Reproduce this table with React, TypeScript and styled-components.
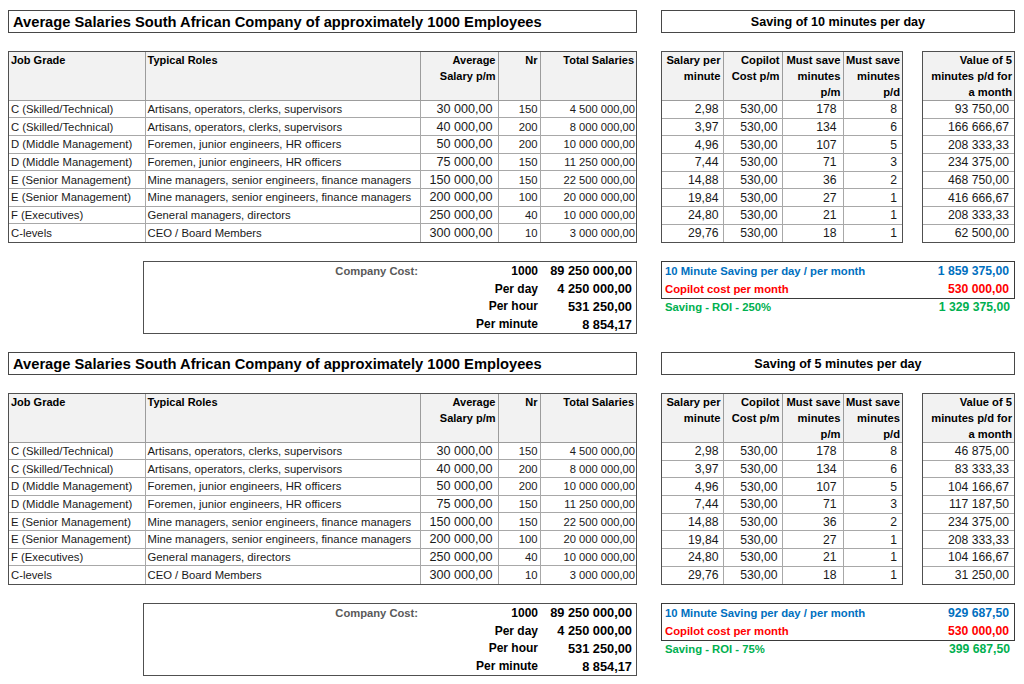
import React from 'react';
import styled, { createGlobalStyle } from 'styled-components';

const GlobalStyle = createGlobalStyle`
  html, body { margin: 0; padding: 0; background: #ffffff; }
  body { font-family: "Liberation Sans", Arial, sans-serif; color: #000; }
  * { box-sizing: border-box; }
`;

const Page = styled.div`
  display: flex;
  flex-direction: column;
  gap: 18px;
  padding: 10px 0 0 8px;
  width: 1024px;
`;

const Section = styled.section`
  display: grid;
  grid-template-columns: 629px 24px 242px 19px 93px;
  grid-template-rows: 23px auto auto;
  row-gap: 18px;
  align-items: start;
`;

const TitleBox = styled.div<{ $wide?: boolean }>`
  grid-column: ${p => (p.$wide ? '1 / 2' : '3 / 6')};
  height: 23px;
  border: 1px solid #474747;
  display: flex;
  align-items: center;
  justify-content: ${p => (p.$wide ? 'flex-start' : 'center')};
  padding: 0 4px;
  font-weight: 700;
  font-size: ${p => (p.$wide ? '14.7px' : '12.6px')};
  white-space: nowrap;
`;

const TableBox = styled.div<{ $col: string }>`
  grid-column: ${p => p.$col};
  border: 1px solid #505050;
`;

const Grid = styled.table`
  width: 100%;
  border-collapse: collapse;
  border-style: hidden;
  table-layout: fixed;
`;

const HeadRow = styled.tr`
  height: 48px;
`;

const BodyRow = styled.tr`
  height: 17.7px;
`;

const Th = styled.th<{ $left?: boolean; $size?: number }>`
  background: #f2f2f2;
  border: 1px solid #9c9c9c;
  font-weight: 700;
  font-size: ${p => p.$size ?? 11}px;
  line-height: 16px;
  text-align: ${p => (p.$left ? 'left' : 'right')};
  vertical-align: top;
  padding: 0 2px;
`;

const Td = styled.td<{ $left?: boolean; $size?: number; $pad?: number }>`
  border: 1px solid #a8a8a8;
  background: #ffffff;
  font-size: ${p => p.$size ?? 11.3}px;
  line-height: 15px;
  color: #1a1a1a;
  text-align: ${p => (p.$left ? 'left' : 'right')};
  vertical-align: middle;
  white-space: nowrap;
  overflow: hidden;
  padding: 1px ${p => (p.$left ? 2 : p.$pad ?? 2)}px 0 2px;
`;

const CostBox = styled.div`
  grid-column: 1 / 2;
  margin-left: 135px;
  border: 1px solid #505050;
  display: grid;
  grid-template-columns: 1fr 120px 96px;
  grid-auto-rows: 17.75px;
`;

const CostCell = styled.div<{ $muted?: boolean; $value?: boolean }>`
  display: flex;
  align-items: center;
  justify-content: flex-end;
  padding-right: ${p => (p.$value ? 4 : 2)}px;
  font-weight: 700;
  font-size: ${p => (p.$value ? 12.8 : p.$muted ? 11.2 : 12)}px;
  color: ${p => (p.$muted ? '#595959' : '#000')};
  white-space: nowrap;
`;

const RoiArea = styled.div`
  grid-column: 3 / 6;
  display: flex;
  flex-direction: column;
`;

const RoiBox = styled.div`
  border: 1px solid #3a3a3a;
  display: flex;
  flex-direction: column;
`;

const RoiRow = styled.div<{ $color: string; $outside?: boolean }>`
  height: 17.75px;
  display: flex;
  align-items: center;
  justify-content: space-between;
  padding: 0 5px 0 ${p => (p.$outside ? 4 : 3)}px;
  color: ${p => p.$color};
  font-weight: 700;
  white-space: nowrap;
`;

const RoiLabel = styled.span`
  font-size: 11.3px;
`;

const RoiValue = styled.span`
  font-size: 12.2px;
`;

type LeftRow = [string, string, string, string, string];

const leftRows: LeftRow[] = [
  ['C (Skilled/Technical)', 'Artisans, operators, clerks, supervisors', '30 000,00', '150', '4 500 000,00'],
  ['C (Skilled/Technical)', 'Artisans, operators, clerks, supervisors', '40 000,00', '200', '8 000 000,00'],
  ['D (Middle Management)', 'Foremen, junior engineers, HR officers', '50 000,00', '200', '10 000 000,00'],
  ['D (Middle Management)', 'Foremen, junior engineers, HR officers', '75 000,00', '150', '11 250 000,00'],
  ['E (Senior Management)', 'Mine managers, senior engineers, finance managers', '150 000,00', '150', '22 500 000,00'],
  ['E (Senior Management)', 'Mine managers, senior engineers, finance managers', '200 000,00', '100', '20 000 000,00'],
  ['F (Executives)', 'General managers, directors', '250 000,00', '40', '10 000 000,00'],
  ['C-levels', 'CEO / Board Members', '300 000,00', '10', '3 000 000,00'],
];

const rightRows: [string, string, string, string][] = [
  ['2,98', '530,00', '178', '8'],
  ['3,97', '530,00', '134', '6'],
  ['4,96', '530,00', '107', '5'],
  ['7,44', '530,00', '71', '3'],
  ['14,88', '530,00', '36', '2'],
  ['19,84', '530,00', '27', '1'],
  ['24,80', '530,00', '21', '1'],
  ['29,76', '530,00', '18', '1'],
];

interface SectionData {
  minutes: number;
  values: string[];
  saving: string;
  roi: string;
  result: string;
}

const sections: SectionData[] = [
  {
    minutes: 10,
    values: ['93 750,00', '166 666,67', '208 333,33', '234 375,00', '468 750,00', '416 666,67', '208 333,33', '62 500,00'],
    saving: '1 859 375,00',
    roi: '250%',
    result: '1 329 375,00',
  },
  {
    minutes: 5,
    values: ['46 875,00', '83 333,33', '104 166,67', '117 187,50', '234 375,00', '208 333,33', '104 166,67', '31 250,00'],
    saving: '929 687,50',
    roi: '75%',
    result: '399 687,50',
  },
];

const costRows: [string, string, string][] = [
  ['Company Cost:', '1000', '89 250 000,00'],
  ['', 'Per day', '4 250 000,00'],
  ['', 'Per hour', '531 250,00'],
  ['', 'Per minute', '8 854,17'],
];

const SalarySection: React.FC<{ data: SectionData }> = ({ data }) => (
  <Section>
    <TitleBox $wide>Average Salaries South African Company of approximately 1000 Employees</TitleBox>
    <TitleBox>Saving of {data.minutes} minutes per day</TitleBox>

    <TableBox $col="1 / 2">
      <Grid>
        <colgroup>
          <col style={{ width: 136 }} />
          <col style={{ width: 275 }} />
          <col style={{ width: 78 }} />
          <col style={{ width: 42 }} />
          <col style={{ width: 96 }} />
        </colgroup>
        <thead>
          <HeadRow>
            <Th $left>Job Grade</Th>
            <Th $left>Typical Roles</Th>
            <Th>
              Average
              <br />
              Salary p/m
            </Th>
            <Th>Nr</Th>
            <Th>Total Salaries</Th>
          </HeadRow>
        </thead>
        <tbody>
          {leftRows.map((r, i) => (
            <BodyRow key={i}>
              <Td $left>{r[0]}</Td>
              <Td $left>{r[1]}</Td>
              <Td $size={12.6} $pad={5}>{r[2]}</Td>
              <Td $size={11.3}>{r[3]}</Td>
              <Td $size={11.2} $pad={1}>{r[4]}</Td>
            </BodyRow>
          ))}
        </tbody>
      </Grid>
    </TableBox>

    <TableBox $col="3 / 4">
      <Grid>
        <colgroup>
          <col style={{ width: 61 }} />
          <col style={{ width: 59 }} />
          <col style={{ width: 61 }} />
          <col style={{ width: 59 }} />
        </colgroup>
        <thead>
          <HeadRow>
            <Th $size={11.2}>
              Salary per
              <br />
              minute
            </Th>
            <Th $size={11.2}>
              Copilot
              <br />
              Cost p/m
            </Th>
            <Th $size={11.2}>
              Must save
              <br />
              minutes
              <br />
              p/m
            </Th>
            <Th $size={11.2}>
              Must save
              <br />
              minutes
              <br />
              p/d
            </Th>
          </HeadRow>
        </thead>
        <tbody>
          {rightRows.map((r, i) => (
            <BodyRow key={i}>
              <Td $size={12.2} $pad={4}>{r[0]}</Td>
              <Td $size={12.2} $pad={4}>{r[1]}</Td>
              <Td $size={12.2} $pad={6}>{r[2]}</Td>
              <Td $size={12.2} $pad={5}>{r[3]}</Td>
            </BodyRow>
          ))}
        </tbody>
      </Grid>
    </TableBox>

    <TableBox $col="5 / 6">
      <Grid>
        <thead>
          <HeadRow>
            <Th $size={11.2}>
              Value of 5
              <br />
              minutes p/d for
              <br />
              a month
            </Th>
          </HeadRow>
        </thead>
        <tbody>
          {data.values.map((v, i) => (
            <BodyRow key={i}>
              <Td $size={12.2} $pad={5}>{v}</Td>
            </BodyRow>
          ))}
        </tbody>
      </Grid>
    </TableBox>

    <CostBox>
      {costRows.map((r, i) => (
        <React.Fragment key={i}>
          <CostCell $muted>{r[0]}</CostCell>
          <CostCell>{r[1]}</CostCell>
          <CostCell $value>{r[2]}</CostCell>
        </React.Fragment>
      ))}
    </CostBox>

    <RoiArea>
      <RoiBox>
        <RoiRow $color="#0070c0">
          <RoiLabel>10 Minute Saving per day / per month</RoiLabel>
          <RoiValue>{data.saving}</RoiValue>
        </RoiRow>
        <RoiRow $color="#ff0000">
          <RoiLabel>Copilot cost per month</RoiLabel>
          <RoiValue>530 000,00</RoiValue>
        </RoiRow>
      </RoiBox>
      <RoiRow $color="#00b050" $outside>
        <RoiLabel>Saving - ROI - {data.roi}</RoiLabel>
        <RoiValue>{data.result}</RoiValue>
      </RoiRow>
    </RoiArea>
  </Section>
);

export default function App() {
  return (
    <>
      <GlobalStyle />
      <Page>
        {sections.map(s => (
          <SalarySection key={s.minutes} data={s} />
        ))}
      </Page>
    </>
  );
}
